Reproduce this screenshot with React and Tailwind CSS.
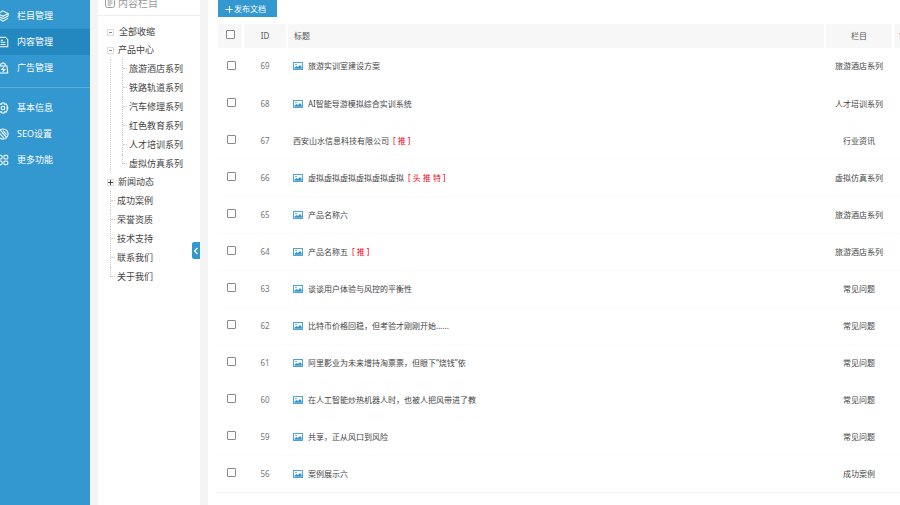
import React from "react";

const primaryMenu = [
  { label: "栏目管理", icon: "layers" },
  { label: "内容管理", icon: "doc", active: true },
  { label: "广告管理", icon: "ad" },
];

const secondaryMenu = [
  { label: "基本信息", icon: "gear" },
  { label: "SEO设置", icon: "seo" },
  { label: "更多功能", icon: "more" },
];

const productChildren = ["旅游酒店系列", "铁路轨道系列", "汽车修理系列", "红色教育系列", "人才培训系列", "虚拟仿真系列"];
const leaves = ["成功案例", "荣誉资质", "技术支持", "联系我们", "关于我们"];

const rows = [
  { id: 69, title: "旅游实训室建设方案", category: "旅游酒店系列", image: true },
  { id: 68, title: "AI智能导游模拟综合实训系统", category: "人才培训系列", image: true },
  { id: 67, title: "西安山水信息科技有限公司", category: "行业资讯", tags: "推" },
  { id: 66, title: "虚拟虚拟虚拟虚拟虚拟虚拟", category: "虚拟仿真系列", image: true, tags: "头 推 特" },
  { id: 65, title: "产品名称六", category: "旅游酒店系列", image: true },
  { id: 64, title: "产品名称五", category: "旅游酒店系列", image: true, tags: "推" },
  { id: 63, title: "谈谈用户体验与风控的平衡性", category: "常见问题", image: true },
  { id: 62, title: "比特币价格回稳，但考验才刚刚开始......", category: "常见问题", image: true },
  { id: 61, title: "阿里影业为未来增持淘票票，但眼下“烧钱”依", category: "常见问题", image: true },
  { id: 60, title: "在人工智能炒热机器人时，也被人把风带进了教", category: "常见问题", image: true },
  { id: 59, title: "共享，正从风口到风险", category: "常见问题", image: true },
  { id: 56, title: "案例展示六", category: "成功案例", image: true },
];

const glyphs = {
  layers: (
    <>
      <path d="M10 1.500 18.500 6 10 10.500 1.500 6Z" />
      <path d="M1.500 6v4L10 14.500 18.500 10V6" />
      <path d="M1.500 13.500 10 18.500 18.500 13.500" />
    </>
  ),
  doc: (
    <>
      <path d="M2 2h12l4 4v12H2Z" />
      <path d="M6 7h4M6 10.500h8M6 14h8" />
    </>
  ),
  ad: (
    <>
      <path d="M3.500 6.500h13l1.500 12H2Z" />
      <path d="M6 6.500C6 0 14 0 14 6.500" />
      <path d="M11.500 8.500 8 12.500h5L9.500 16.500" />
    </>
  ),
  gear: (
    <>
      <path d="M8 1.500h4l.8 2.300 2.400-.6 2.300 3.300-1.200 1.900L18.500 10l-2.200 1.600 1.200 1.900-2.300 3.300-2.400-.6-.8 2.300H8l-.8-2.300-2.400.6-2.300-3.300 1.200-1.900L1.500 10l2.200-1.600-1.200-1.900 2.300-3.300 2.400.6Z" />
      <circle cx="10" cy="10" r="3" />
    </>
  ),
  seo: (
    <>
      <circle cx="10" cy="10" r="8.500" />
      <path d="M5.500 4 16 15.500M4 8.500l7.500 8.500M10 4.500l6 6.500" />
    </>
  ),
  more: (
    <>
      <rect x="2" y="2" width="6.500" height="6.500" rx="2" />
      <rect x="11.500" y="2" width="6.500" height="6.500" rx="2" />
      <rect x="2" y="11.500" width="6.500" height="6.500" rx="2" />
      <rect x="11.500" y="11.500" width="6.500" height="6.500" rx="2" />
    </>
  ),
};

function MenuIcon({ name }) {
  return (
    <svg viewBox="0 0 20 20" className="-ml-[3px] size-[12px] shrink-0" fill="none" stroke="currentColor" strokeWidth="1.700" aria-hidden="true">
      {glyphs[name]}
    </svg>
  );
}

function MenuItem({ label, icon, active }) {
  return (
    <li>
      <a href="#" className={`flex h-[26px] items-center gap-2 text-[9px] text-white ${active ? "bg-[#2288bf]" : ""}`}>
        <MenuIcon name={icon} />
        {label}
      </a>
    </li>
  );
}

function Toggle({ open, label }) {
  return (
    <button type="button" aria-label={label} className="flex size-[7px] shrink-0 items-center justify-center border border-[#dcdcdc] bg-white">
      <svg viewBox="0 0 5 5" className="size-[5px] shrink-0" stroke={open ? "#888" : "#444"} strokeWidth="1" aria-hidden="true">
        <path d={open ? "M1 2.500h3" : "M0 2.500h5M2.500 0v5"} />
      </svg>
    </button>
  );
}

function Branch({ label, last }) {
  return (
    <li className="flex h-[19px]">
      <span className={`w-px border-l border-dotted border-[#ccc] ${last ? "h-[10px]" : "h-full"}`} />
      <span className="mt-[9px] h-px w-[4px] border-t border-dotted border-[#ccc]" />
      <a href="#" className="ml-[2px] leading-[19px]">{label}</a>
    </li>
  );
}

function ImageIcon() {
  return (
    <svg viewBox="0 0 20 16" className="mr-[5px] h-[8px] w-[10px] shrink-0" aria-hidden="true">
      <rect x="1" y="1" width="18" height="14" fill="#fff" stroke="#4ba5d6" strokeWidth="2" />
      <path d="M3 13.500V11l4-3 3 2 4-4 3.500 4v3.500Z" fill="#3398cf" />
      <circle cx="6" cy="5" r="1.500" fill="#3398cf" />
    </svg>
  );
}

function Tick({ label }) {
  return <input type="checkbox" aria-label={label} className="block size-[9px] appearance-none rounded-[1px] border border-[#8a8a8a] bg-white checked:bg-[#3398cf]" />;
}

export default function App() {
  return (
    <div className="flex h-screen overflow-hidden bg-[#f4f4f4] font-['Noto_Sans','Noto_Sans_CJK_SC',sans-serif] text-[#444]">
      <nav className="w-[90px] shrink-0 bg-[#3398cf] pt-[3px]">
        <ul>
          {primaryMenu.map((item) => <MenuItem key={item.label} {...item} />)}
        </ul>
        <ul className="mt-[6px] border-t border-[#5badda] pt-[7px]">
          {secondaryMenu.map((item) => <MenuItem key={item.label} {...item} />)}
        </ul>
      </nav>

      <aside className="relative ml-2 w-[102px] shrink-0 bg-white text-[9px]">
        <div className="flex h-[16px] items-end border-b border-[#eee] pb-[5px] pl-[7px]">
          <h2 className="flex items-center gap-[3px] text-[10px] leading-[14px] text-[#999]">
            <svg viewBox="0 0 20 20" className="size-[10px]" fill="none" stroke="currentColor" strokeWidth="2" aria-hidden="true">
              <rect x="1" y="1" width="18" height="18" rx="4" />
              <path d="M5 6h10M5 10h10M5 14h7" />
            </svg>
            内容栏目
          </h2>
        </div>
        <ul className="pt-[7px] pl-[9px]">
          <li className="flex h-[18px] items-center gap-[5px]">
            <Toggle open label="收缩" />
            <a href="#">全部收缩</a>
          </li>
          <li>
            <div className="flex h-[18px] items-center gap-1">
              <Toggle open label="收起产品中心" />
              <a href="#">产品中心</a>
            </div>
            <ul className="ml-[3px] border-l border-dotted border-[#ccc] pl-[11px]">
              {productChildren.map((label, i) => <Branch key={label} label={label} last={i === productChildren.length - 1} />)}
            </ul>
          </li>
          <li className="flex h-[18px] items-center gap-1">
            <Toggle label="展开新闻动态" />
            <a href="#">新闻动态</a>
          </li>
          <li>
            <ul className="pl-[3px]">
              {leaves.map((label, i) => <Branch key={label} label={label} last={i === leaves.length - 1} />)}
            </ul>
          </li>
        </ul>
        <button type="button" aria-label="收起栏目" className="absolute top-[242px] right-0 flex h-[17px] w-[8px] items-center justify-center rounded-l-[2px] bg-[#3398cf]">
          <svg viewBox="0 0 6 8" className="h-[8px] w-[6px]" fill="none" stroke="#fff" strokeWidth="1.200" aria-hidden="true">
            <path d="M4.500 1 1.500 4l3 3" />
          </svg>
        </button>
      </aside>

      <main className="ml-2 min-w-0 flex-1 overflow-hidden bg-white pl-[10px]">
        <button type="button" className="flex h-[17px] items-center gap-px bg-[#3398cf] pr-[11px] pl-[7px] text-[8px] text-white">
          <svg viewBox="0 0 8 8" className="size-[8px]" stroke="currentColor" aria-hidden="true">
            <path d="M0.500 4.500h7M4.500 1v7" />
          </svg>
          发布文档
        </button>
        <table className="mt-[7px] w-full table-fixed border-collapse text-[8px] leading-[12px]">
          <colgroup>
            <col className="w-[25px]" />
            <col className="w-[44px]" />
            <col />
            <col className="w-[68px]" />
            <col className="w-[7px]" />
          </colgroup>
          <thead>
            <tr className="h-[24px] bg-[#f7f7f7] text-[#555]">
              <th className="border-r-2 border-white pb-[3px] pl-2"><Tick label="全选" /></th>
              <th className="border-r-2 border-white font-normal">ID</th>
              <th className="border-r-2 border-white pl-[6px] text-left font-normal">标题</th>
              <th className="border-r-2 border-white font-normal">栏目</th>
              <th className="overflow-hidden pl-[5px] text-left font-normal whitespace-nowrap">审核</th>
            </tr>
          </thead>
          <tbody>
            {rows.map((row) => (
              <tr key={row.id} className="h-[37px] border-b border-[#fcfcfc] last:border-[#f4f4f4]">
                <td className="pb-[2px] pl-[9px]"><Tick label={row.title} /></td>
                <td className="text-center text-[#777]">{row.id}</td>
                <td className="pl-[6px]">
                  <div className="flex items-center whitespace-nowrap">
                    {row.image && <ImageIcon />}
                    <a href="#">{row.title}</a>
                    {row.tags && <span className="ml-1 text-[#f00018]">[ {row.tags} ]</span>}
                  </div>
                </td>
                <td className="text-center whitespace-nowrap">{row.category}</td>
                <td />
              </tr>
            ))}
          </tbody>
        </table>
      </main>
    </div>
  );
}
